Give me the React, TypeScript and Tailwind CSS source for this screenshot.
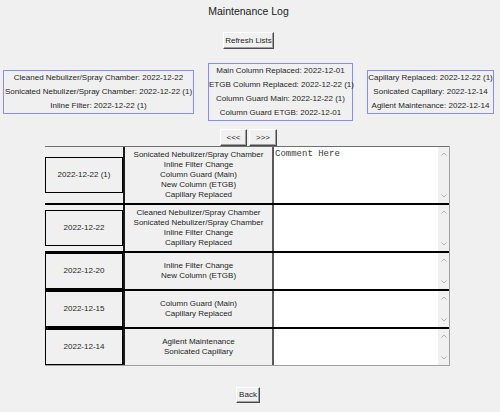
import React from "react";

type Row = {
  date: string;
  items: string[];
  comment?: string;
};

const ROWS: Row[] = [
  {
    date: "2022-12-22 (1)",
    items: [
      "Sonicated Nebulizer/Spray Chamber",
      "Inline Filter Change",
      "Column Guard (Main)",
      "New Column (ETGB)",
      "Capillary Replaced",
    ],
    comment: "Comment Here",
  },
  {
    date: "2022-12-22",
    items: [
      "Cleaned Nebulizer/Spray Chamber",
      "Sonicated Nebulizer/Spray Chamber",
      "Inline Filter Change",
      "Capillary Replaced",
    ],
  },
  { date: "2022-12-20", items: ["Inline Filter Change", "New Column (ETGB)"] },
  { date: "2022-12-15", items: ["Column Guard (Main)", "Capillary Replaced"] },
  { date: "2022-12-14", items: ["Agilent Maintenance", "Sonicated Capillary"] },
];

const LEFT_BOX = [
  "Cleaned Nebulizer/Spray Chamber: 2022-12-22",
  "Sonicated Nebulizer/Spray Chamber: 2022-12-22 (1)",
  "Inline Filter: 2022-12-22 (1)",
];

const MID_BOX = [
  "Main Column Replaced: 2022-12-01",
  "ETGB Column Replaced: 2022-12-22 (1)",
  "Column Guard Main: 2022-12-22 (1)",
  "Column Guard ETGB: 2022-12-01",
];

const RIGHT_BOX = [
  "Capillary Replaced: 2022-12-22 (1)",
  "Sonicated Capillary: 2022-12-14",
  "Agilent Maintenance: 2022-12-14",
];

function TkButton({ label, className }: { label: string; className: string }) {
  return (
    <button
      className={`flex items-center justify-center bg-[#f0f0f0] border border-t-white border-l-white border-r-[#4a4a4a] border-b-[#4a4a4a] shadow-[inset_-1px_-1px_0_#a0a0a0] text-[8px] leading-none text-[#1e1e1e] ${className}`}
    >
      {label}
    </button>
  );
}

function StatusBox({ lines, width }: { lines: string[]; width: string }) {
  return (
    <div className={`border border-[#8a8aff] text-center leading-[14px] whitespace-nowrap ${width}`}>
      {lines.map((l) => (
        <div key={l}>{l}</div>
      ))}
    </div>
  );
}

function Chevron({ up }: { up: boolean }) {
  return (
    <svg width="6" height="4" viewBox="0 0 6 4" className="block">
      <path
        d={up ? "M0.5 3.5 L3 1 L5.5 3.5" : "M0.5 0.5 L3 3 L5.5 0.5"}
        fill="none"
        stroke="#a8a8a8"
        strokeWidth="0.9"
      />
    </svg>
  );
}

function LogRow({ row, first }: { row: Row; first: boolean }) {
  return (
    <div
      className={`flex ${first ? "border-t border-[#707070]" : "border-t-2 border-black"}`}
    >
      <div className="w-[78px] flex items-center">
        <div className="w-full h-[36px] border border-black flex items-center justify-center">
          {row.date}
        </div>
      </div>
      <div className="w-[149px] border-l-2 border-[#1a1a1a] py-[3px] flex flex-col justify-center text-center leading-[10px] whitespace-nowrap">
        {row.items.map((it) => (
          <div key={it}>{it}</div>
        ))}
      </div>
      <div className="flex-1 flex bg-white border-l-2 border-[#5a5a5a]">
        <div className="flex-1 pl-[1px] pt-[2px] font-['Liberation_Mono',monospace] text-[9px] leading-[11px] text-[#3a3a3a]">
          {row.comment ?? ""}
        </div>
        <div className="w-[11px] bg-[#f0f0f0] flex flex-col items-center justify-between py-[5px]">
          <Chevron up />
          <Chevron up={false} />
        </div>
      </div>
    </div>
  );
}

export default function App() {
  return (
    <div className="w-[500px] h-[412px] bg-[#f0f0f0] text-[8px] text-[#1e1e1e] font-['Liberation_Sans',Arial,sans-serif] overflow-hidden">
      <div className="pt-[4px] text-center text-[10.5px] leading-[14px] text-[#222] pr-[3px]">
        Maintenance Log
      </div>

      <div className="mt-[14px] flex justify-center pr-[3px]">
        <TkButton label="Refresh Lists" className="w-[51px] h-[17px]" />
      </div>

      <div className="mt-[14px] h-[58px] flex items-center gap-[14px] pl-[3px]">
        <StatusBox lines={LEFT_BOX} width="w-[191px]" />
        <StatusBox lines={MID_BOX} width="w-[145px]" />
        <StatusBox lines={RIGHT_BOX} width="w-[127px]" />
      </div>

      <div className="mt-[8px] flex justify-center gap-[2px] pr-[3px]">
        <TkButton label="<<<" className="w-[27px] h-[17px]" />
        <TkButton label=">>>" className="w-[28px] h-[17px]" />
      </div>

      <div className="ml-[45px] w-[405px] border-b border-r border-[#a0a0a0]">
        {ROWS.map((r, i) => (
          <LogRow key={r.date} row={r} first={i === 0} />
        ))}
      </div>

      <div className="mt-[21px] flex justify-center pr-[4px]">
        <TkButton label="Back" className="w-[24px] h-[16px]" />
      </div>
    </div>
  );
}
